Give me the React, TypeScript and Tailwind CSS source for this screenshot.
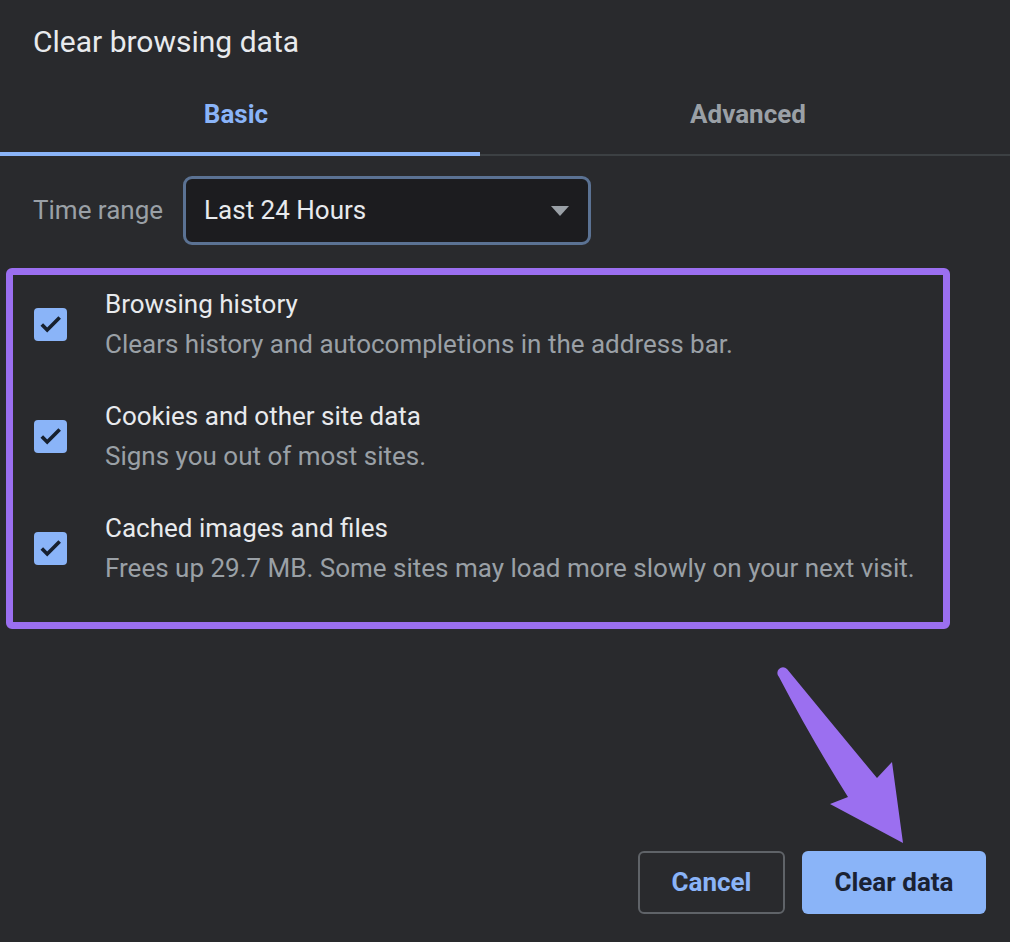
import { useState } from "react";

const items = [
  { title: "Browsing history", desc: "Clears history and autocompletions in the address bar." },
  { title: "Cookies and other site data", desc: "Signs you out of most sites." },
  { title: "Cached images and files", desc: "Frees up 29.7 MB. Some sites may load more slowly on your next visit." },
];

function Check() {
  return (
    <div className="w-[33px] h-[33px] rounded-[4px] bg-[#8ab4f8] flex items-center justify-center shrink-0">
      <svg width="26" height="26" viewBox="0 0 24 24">
        <path d="M3.5 12.5l5 5L20 6" fill="none" stroke="#17202e" strokeWidth="3.4" />
      </svg>
    </div>
  );
}

export default function App() {
  const [tab, setTab] = useState(0);
  return (
    <div className="relative w-[1010px] h-[942px] bg-[#292a2d] font-['Roboto',sans-serif] overflow-hidden">
      <div className="h-[85px] pl-[33px] pt-[22px] text-[30px] leading-[40px] text-[#e8eaed]">Clear browsing data</div>

      <div className="flex h-[71px] border-b-2 border-[#3c4043]">
        {["Basic", "Advanced"].map((t, i) => (
          <button
            key={t}
            onClick={() => setTab(i)}
            className={
              "flex items-start justify-center pt-[11px] text-[26px] leading-[36px] font-bold border-b-4 -mb-[2px] " +
              (i === 0 ? "w-[480px] pr-[8px] " : "w-[530px] pl-[6px] ") +
              (tab === i ? "text-[#8ab4f8] border-[#8ab4f8]" : "text-[#9aa0a6] border-transparent")
            }
          >
            {t}
          </button>
        ))}
      </div>

      <div className="flex items-center h-[112px] pl-[33px] pb-[3px]">
        <span className="text-[26px] text-[#9aa0a6] mr-[20px]">Time range</span>
        <div className="w-[408px] h-[69px] rounded-[9px] border-[3px] border-[#5b7293] bg-[#1c1c1f] flex items-center justify-between pl-[18px] pr-[18px]">
          <span className="text-[26px] text-[#e8eaed]">Last 24 Hours</span>
          <svg width="20" height="12" viewBox="0 0 20 12">
            <path d="M1 1h18L10 11z" fill="#9aa0a6" />
          </svg>
        </div>
      </div>

      <div className="ml-[6px] w-[944px] h-[361px] rounded-[6px] border-[7px] border-[#9b6ff0] pt-[9px] flex flex-col gap-[32px]">
        {items.map((it) => (
          <div key={it.title} className="flex items-center pl-[21px]">
            <Check />
            <div className="ml-[38px]">
              <div className="text-[26px] leading-[40px] text-[#e8eaed]">{it.title}</div>
              <div className="text-[26px] leading-[40px] text-[#9aa0a6]">{it.desc}</div>
            </div>
          </div>
        ))}
      </div>

      <div className="flex justify-end gap-[17px] pr-[24px] mt-[222px]">
        <button className="w-[147px] h-[63px] rounded-[6px] border-2 border-[#5f6368] text-[#8ab4f8] text-[26px] font-bold">Cancel</button>
        <button className="w-[184px] h-[63px] rounded-[6px] bg-[#8ab4f8] text-[#1a2233] text-[26px] font-bold">Clear data</button>
      </div>

      <svg className="absolute inset-0 pointer-events-none" width="1010" height="942" viewBox="0 0 1010 942">
        <path
          d="M779 677 Q812 740 848 797 L830 804 L903 843 L892 762 L877 778 Q833 725 787 669 A5 5 0 0 0 779 677 Z"
          fill="#9b6ff0"
        />
      </svg>
    </div>
  );
}
